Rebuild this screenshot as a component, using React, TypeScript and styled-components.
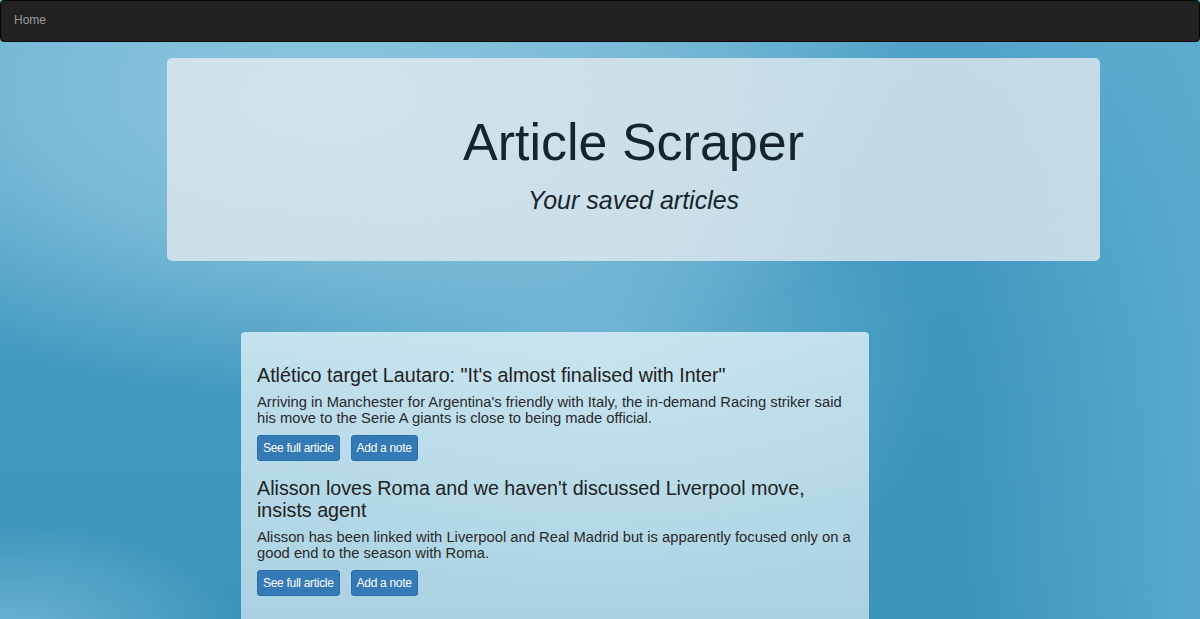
import React from "react";
import styled, { createGlobalStyle } from "styled-components";

const GlobalStyle = createGlobalStyle`
  html, body {
    margin: 0;
    padding: 0;
    height: 100%;
  }
  body {
    font-family: "Liberation Sans", Arial, Helvetica, sans-serif;
    color: #333;
    min-height: 619px;
    background-color: #3f97bd;
    background-image:
      radial-gradient(ellipse 600px 300px at 330px 100px, rgba(140, 198, 223, 1) 0%, rgba(135, 194, 220, 0.75) 50%, rgba(135, 194, 220, 0) 100%),
      radial-gradient(ellipse 340px 260px at 600px 360px, rgba(120, 186, 215, 0.85), rgba(120, 186, 215, 0) 100%),
      radial-gradient(ellipse 230px 110px at 10px 630px, rgba(110, 180, 212, 0.95), rgba(110, 180, 212, 0) 100%),
      linear-gradient(90deg, rgba(92, 172, 207, 0) 80%, rgba(92, 172, 207, 0.85) 100%),
      radial-gradient(ellipse 420px 380px at 900px 420px, rgba(58, 146, 186, 0.6), rgba(58, 146, 186, 0) 100%),
      radial-gradient(ellipse 220px 200px at 920px 150px, rgba(60, 148, 188, 0.6), rgba(60, 148, 188, 0) 100%),
      linear-gradient(180deg, #5aa9cd 0%, #4299c1 55%, #3c94bb 100%);
  }
`;

const Navbar = styled.nav`
  display: flex;
  align-items: center;
  box-sizing: border-box;
  height: 42px;
  padding: 0 13px;
  background: #222;
  border: 1px solid #080808;
  border-radius: 4px;
`;

const NavLink = styled.a`
  font-size: 12px;
  color: #9d9d9d;
  text-decoration: none;
  margin-top: -2px;
`;

const Main = styled.main`
  display: flex;
  flex-direction: column;
  align-items: flex-start;
`;

const Jumbotron = styled.header`
  box-sizing: border-box;
  margin: 16px 0 0 167px;
  width: 933px;
  height: 203px;
  padding-top: 54px;
  border-radius: 5px;
  background: rgba(228, 234, 238, 0.78);
  display: flex;
  flex-direction: column;
  align-items: center;
`;

const Title = styled.h1`
  margin: 0;
  font-size: 52px;
  font-weight: 400;
  line-height: 60px;
  color: #16242c;
`;

const Subtitle = styled.p`
  margin: 14px 0 0;
  font-size: 25px;
  font-style: italic;
  line-height: 28px;
  color: #16242c;
`;

const Panel = styled.section`
  box-sizing: border-box;
  margin: 71px 0 0 241px;
  width: 628px;
  min-height: 300px;
  padding: 32px 16px 16px;
  border-radius: 4px;
  background: linear-gradient(180deg, rgba(215, 236, 245, 0.85) 0%, rgba(200, 226, 237, 0.78) 100%);
`;

const Article = styled.article`
  display: flex;
  flex-direction: column;
  align-items: flex-start;
  & + & {
    margin-top: 16px;
  }
`;

const Headline = styled.h4`
  margin: 0;
  font-size: 19.7px;
  font-weight: 400;
  line-height: 22px;
  color: #222;
`;

const Summary = styled.p`
  margin: 8px 0 0;
  font-size: 14.75px;
  line-height: 16px;
  color: #2a2a2a;
`;

const Actions = styled.div`
  display: flex;
  gap: 11px;
  margin-top: 9px;
`;

const Button = styled.button`
  box-sizing: border-box;
  height: 26px;
  padding: 0 5px;
  font-family: "Liberation Sans", Arial, sans-serif;
  font-size: 12px;
  letter-spacing: -0.3px;
  color: #fff;
  background: #337ab7;
  border: 1px solid #2e6da4;
  border-radius: 3px;
  cursor: pointer;
`;

const articles = [
  {
    title: 'Atlético target Lautaro: "It\'s almost finalised with Inter"',
    summary:
      "Arriving in Manchester for Argentina's friendly with Italy, the in-demand Racing striker said his move to the Serie A giants is close to being made official.",
  },
  {
    title: "Alisson loves Roma and we haven't discussed Liverpool move, insists agent",
    summary:
      "Alisson has been linked with Liverpool and Real Madrid but is apparently focused only on a good end to the season with Roma.",
  },
];

export default function App() {
  return (
    <>
      <GlobalStyle />
      <Navbar>
        <NavLink href="#">Home</NavLink>
      </Navbar>
      <Main>
        <Jumbotron>
          <Title>Article Scraper</Title>
          <Subtitle>Your saved articles</Subtitle>
        </Jumbotron>
        <Panel>
          {articles.map((a) => (
            <Article key={a.title}>
              <Headline>{a.title}</Headline>
              <Summary>{a.summary}</Summary>
              <Actions>
                <Button>See full article</Button>
                <Button>Add a note</Button>
              </Actions>
            </Article>
          ))}
        </Panel>
      </Main>
    </>
  );
}
